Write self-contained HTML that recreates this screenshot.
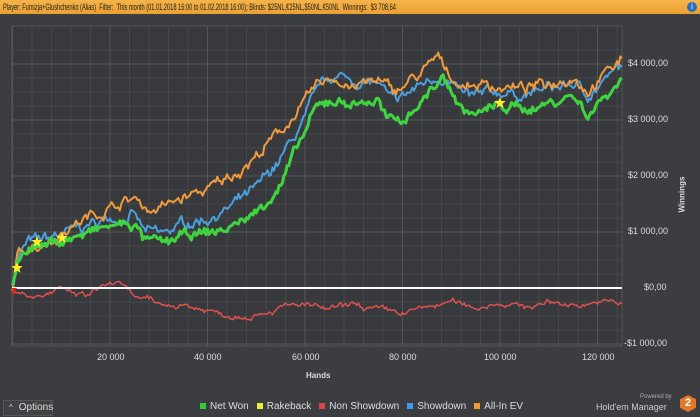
<!DOCTYPE html>
<html><head><meta charset="utf-8"><style>
body{margin:0;width:700px;height:417px;background:#3b3d40;font-family:"Liberation Sans",sans-serif;overflow:hidden;position:relative}
#top{position:absolute;left:0;top:0;width:700px;height:14px;background:linear-gradient(#f6b44a,#e9a032);color:#222;font-size:9px;line-height:14px;white-space:nowrap}
#top span{display:inline-block;margin-left:3px;transform:scaleX(0.63);transform-origin:left center}
.lab{position:absolute;color:#ddd;font-size:9px}
.leg{position:absolute;top:401px;color:#ddd;font-size:10px}
.sq{display:inline-block;width:6px;height:6px;margin:0 4px 0 8px}
</style></head><body>
<div id="top"><span>Player: Fumizja+Glushchenko (Alias)&nbsp; Filter: &nbsp;This month (01.01.2018 16:00 to 01.02.2018 16:00); Blinds: $25NL,€25NL,$50NL,€50NL&nbsp; Winnings: &nbsp;$3 708,64</span></div>
<div style="position:absolute;right:3px;top:2px;width:10px;height:10px;border-radius:50%;background:#2a6fc0;color:#fff;font-size:8px;text-align:center;line-height:10px">i</div>
<svg id="s" width="700" height="417" style="position:absolute;left:0;top:0"></svg>
<div class="lab" style="left:628px;top:58px">$4 000,00</div>
<div class="lab" style="left:628px;top:114px">$3 000,00</div>
<div class="lab" style="left:628px;top:170px">$2 000,00</div>
<div class="lab" style="left:628px;top:226px">$1 000,00</div>
<div class="lab" style="left:644px;top:282px">$0,00</div>
<div class="lab" style="left:624px;top:338px">-$1 000,00</div>
<div class="lab" style="left:664px;top:190px;transform:rotate(-90deg);font-weight:bold;font-size:8px">Winnings</div>
<div class="lab" style="left:97px;top:352px">20 000</div>
<div class="lab" style="left:194px;top:352px">40 000</div>
<div class="lab" style="left:292px;top:352px">60 000</div>
<div class="lab" style="left:389px;top:352px">80 000</div>
<div class="lab" style="left:484px;top:352px">100 000</div>
<div class="lab" style="left:582px;top:352px">120 000</div>
<div class="lab" style="left:306px;top:371px;font-weight:bold;font-size:8px">Hands</div>
<div style="position:absolute;left:3px;top:400px;width:48px;height:14px;border:1px solid #555;background:#404246;color:#ddd;font-size:10px;line-height:14px"><span style="margin:0 6px 0 5px;font-size:8px">^</span>Options</div>
<div class="leg" style="left:192px"><span class="sq" style="background:#3c3"></span>Net Won<span class="sq" style="background:#ee3"></span>Rakeback<span class="sq" style="background:#d44"></span>Non Showdown<span class="sq" style="background:#49e"></span>Showdown<span class="sq" style="background:#e93"></span>All-In EV</div>
<div class="lab" style="left:640px;top:394px;font-size:6px;color:#aaa">Powered by</div>
<div class="lab" style="left:596px;top:402px;font-size:9px;color:#ccc">Hold'em Manager</div>
<div style="position:absolute;left:680px;top:395px;width:16px;height:17px;background:#e5772a;clip-path:polygon(50% 0,100% 25%,100% 75%,50% 100%,0 75%,0 25%);color:#fff;font-weight:bold;font-size:11px;text-align:center;line-height:17px">2</div>
<script>
var s=document.getElementById('s'),h='';
h+='<rect x="12" y="26" width="610" height="320" fill="#37393c" stroke="#555" stroke-width="1"/>';
for(var i=0;i<=31;i++){var x=12.5+i*19.5;if(x>622)break;h+='<line x1="'+x+'" y1="26" x2="'+x+'" y2="346" stroke="'+(i%5==0?'#55575b':'#45474a')+'"/>';}
for(var v=-1000;v<=4250;v+=250){var y=288-v*0.056;h+='<line x1="12" y1="'+y+'" x2="622" y2="'+y+'" stroke="'+(v%1000==0?'#55575b':'#45474a')+'"/>';}
var seed=7;function r(){seed=(seed*16807)%2147483647;return seed/2147483647-0.5;}
function X(k){return 12.5+k*4.875}function Y(v){return 288-v*0.056}
function line(pts,col,w,amp){var d='',n=0,walk=0;for(var i=0;i<pts.length-1;i++){var a=pts[i],b=pts[i+1];var steps=Math.max(2,Math.round((b[0]-a[0])*3));for(var j=0;j<steps;j++){var k=a[0]+(b[0]-a[0])*j/steps;walk=walk*0.8+r()*amp;var v=a[1]+(b[1]-a[1])*j/steps+walk+r()*amp*0.6;d+=(n++?'L':'M')+X(k).toFixed(1)+' '+Y(v).toFixed(1);}}
var l=pts[pts.length-1];d+='L'+X(l[0])+' '+Y(l[1]);h+='<path d="'+d+'" fill="none" stroke="'+col+'" stroke-width="'+w+'" stroke-linejoin="round"/>';}
line([[0,0],[1,550],[3,800],[6,850],[10,950],[15,1100],[20,1250],[25,1300],[27,1000],[31,950],[35,1150],[40,1250],[44,1400],[50,1750],[55,2300],[60,3000],[63,3600],[66,3800],[70,3700],[75,3650],[78,3300],[80,3400],[85,3700],[88,3800],[90,3650],[92,3450],[95,3400],[100,3500],[105,3450],[110,3550],[115,3650],[118,3450],[120,3600],[125,3950]],'#4a9fdc',2,130);
line([[0,0],[1,550],[3,750],[6,800],[10,1000],[15,1250],[20,1450],[25,1600],[28,1400],[31,1450],[35,1600],[40,1750],[44,1950],[50,2350],[55,2800],[60,3300],[63,3650],[66,3750],[70,3600],[75,3700],[78,3500],[80,3600],[85,3900],[87,4100],[90,3800],[92,3600],[95,3650],[100,3600],[105,3550],[110,3650],[115,3800],[118,3550],[120,3700],[125,4100]],'#ef9a3c',2,130);
line([[0,0],[1,500],[3,750],[6,750],[10,850],[15,950],[20,1100],[25,1150],[27,850],[31,780],[35,920],[40,980],[44,1050],[50,1350],[55,1850],[58,2400],[62,3150],[65,3350],[70,3300],[75,3350],[77,2950],[80,3000],[85,3450],[88,3750],[90,3550],[92,3200],[95,3100],[100,3250],[105,3200],[110,3300],[115,3450],[118,3100],[120,3300],[125,3750]],'#3fd43f',3,120);
line([[0,-50],[2,-80],[6,-120],[10,-50],[15,-150],[20,100],[22,50],[25,-150],[30,-300],[35,-300],[40,-400],[45,-500],[50,-450],[55,-350],[60,-300],[65,-400],[70,-300],[75,-400],[80,-450],[85,-350],[90,-250],[95,-350],[100,-250],[105,-350],[110,-250],[115,-300],[120,-250],[125,-280]],'#e05050',1.5,70);
h+='<line x1="12" y1="288" x2="622" y2="288" stroke="#fff" stroke-width="2"/>';
h+='<path d="M12 288 L17 288 L13 296 Z" fill="#d22"/>';
function star(x,y){var p='';for(var i=0;i<10;i++){var a=-Math.PI/2+i*Math.PI/5,rr=i%2?2.5:6;p+=(i?'L':'M')+(x+rr*Math.cos(a)).toFixed(1)+' '+(y+rr*Math.sin(a)).toFixed(1);}h+='<path d="'+p+'Z" fill="#ffef2a"/>';}
star(17,268);star(37,242);star(62,238);star(500,103);
s.innerHTML=h;
</script>
</body></html>
